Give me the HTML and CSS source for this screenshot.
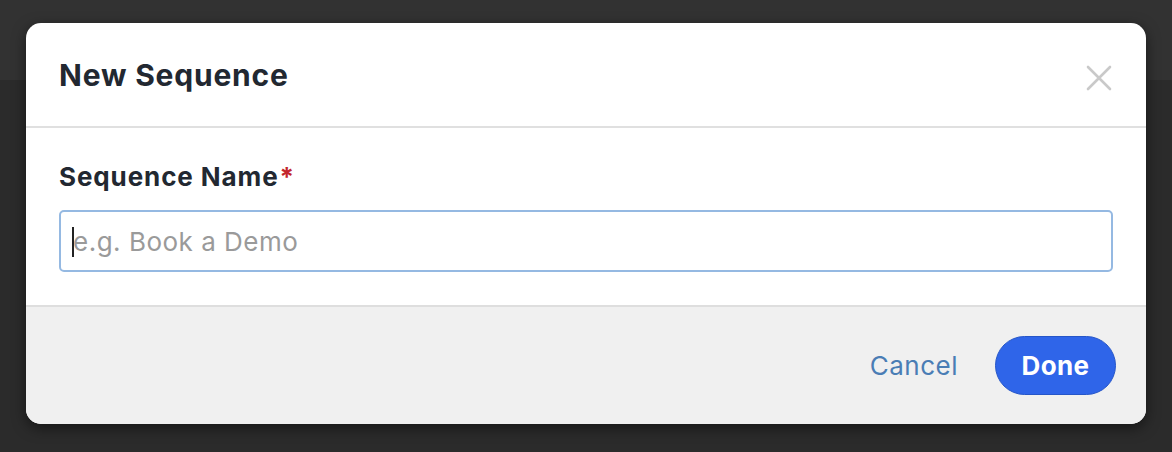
FILE: index.html
```html
<!DOCTYPE html>
<html>

<head>
    <title>New Sequence</title>
    <link rel="stylesheet" href="styles.css">
</head>

<body>
    <div class="topbar"></div>
    <div class="overlay">
        <div class="modal">
            <div class="modal-header">
                <h2 class="modal-title">New Sequence</h2>
                <button type="button" class="close" aria-label="Close">
                    <svg width="26" height="26" viewBox="0 0 26 26">
                        <path d="M2 2 L24 24 M24 2 L2 24" stroke="#c9c9c9" stroke-width="2.6" stroke-linecap="round" fill="none"/>
                    </svg>
                </button>
            </div>
            <div class="modal-body">
                <label class="field-label">Sequence Name<span class="req">*</span></label>
                <div class="input-wrap">
                    <span class="caret"></span>
                    <input type="text" class="field-input" placeholder="e.g. Book a Demo">
                </div>
            </div>
            <div class="modal-footer">
                <button type="button" class="btn-link">Cancel</button>
                <button type="button" class="btn-primary">Done</button>
            </div>
        </div>
    </div>
</body>

</html>
```

FILE: styles.css
```css
html, body {
    margin: 0;
    height: 100%;
}

body {
    background-color: #2b2b2b;
    font-family: Inter, "Liberation Sans", Arial, sans-serif;
    position: relative;
    overflow: hidden;
}

.topbar {
    height: 80px;
    background-color: #323232;
}

.overlay {
    position: absolute;
    top: 0;
    left: 0;
    right: 0;
    bottom: 0;
    padding: 23px 26px 0 26px;
}

.modal {
    background: #fff;
    border-radius: 15px;
    overflow: hidden;
    box-shadow: 0 4px 14px rgba(0, 0, 0, 0.5);
}

.modal-header {
    height: 103px;
    display: flex;
    align-items: center;
    justify-content: space-between;
    padding: 0 34px 0 33px;
    border-bottom: 2px solid #e0e0e0;
}

.modal-title {
    margin: 0;
    font-size: 30px;
    font-weight: 700;
    color: #222831;
    letter-spacing: 0.8px;
}

.close {
    background: none;
    border: none;
    padding: 0;
    margin-top: 6px;
    cursor: pointer;
    display: flex;
}

.modal-body {
    padding: 34px 33px 33px 33px;
    border-bottom: 2px solid #dedede;
}

.field-label {
    display: block;
    font-size: 26px;
    font-weight: 700;
    color: #222831;
    line-height: 30px;
    margin-bottom: 18px;
    letter-spacing: 0.9px;
}

.req {
    color: #c3262b;
    margin-left: 1px;
}

.input-wrap {
    position: relative;
}

.field-input {
    width: 100%;
    box-sizing: border-box;
    height: 62px;
    border: 2px solid #95b9e2;
    border-radius: 5px;
    padding: 0 12px 0 12px;
    font-family: Inter, "Liberation Sans", Arial, sans-serif;
    font-size: 26px;
    letter-spacing: 0.5px;
    color: #333;
    outline: none;
}

.field-input::placeholder {
    color: #9a9a9a;
}

.caret {
    position: absolute;
    left: 13px;
    top: 17px;
    width: 2px;
    height: 30px;
    background: #222;
}

.modal-footer {
    background: #f0f0f0;
    display: flex;
    justify-content: flex-end;
    align-items: center;
    gap: 37px;
    padding: 29px 30px 29px 0;
}

.btn-link {
    background: none;
    border: none;
    font-family: Inter, "Liberation Sans", Arial, sans-serif;
    font-size: 26px;
    letter-spacing: 0.5px;
    color: #4a7db5;
    padding: 0;
    cursor: pointer;
}

.btn-primary {
    width: 121px;
    height: 59px;
    border-radius: 30px;
    background-color: #2f65e9;
    border: 1px solid #2656c8;
    color: #fff;
    font-family: Inter, "Liberation Sans", Arial, sans-serif;
    font-size: 26px;
    font-weight: 700;
    letter-spacing: 0.4px;
    cursor: pointer;
}
```
